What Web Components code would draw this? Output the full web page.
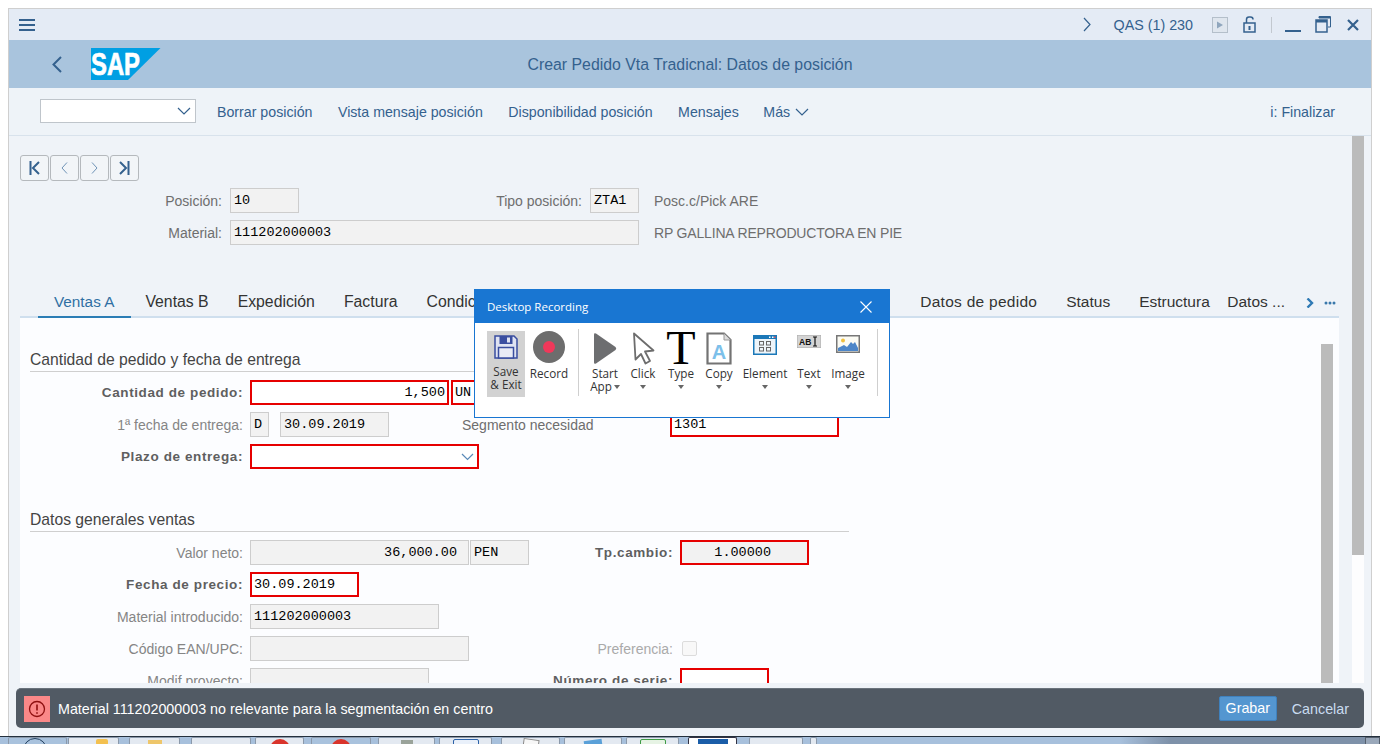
<!DOCTYPE html>
<html lang="es">
<head>
<meta charset="utf-8">
<title>Crear Pedido</title>
<style>
  html, body { margin: 0; padding: 0; height: 744px; overflow: hidden; background: #fff; }
  body { display: flex; flex-direction: column; padding-top: 8px; box-sizing: border-box; font-family: "Liberation Sans", Arial, sans-serif; }
</style>
</head>
<body>
<sap-window>
  <sap-titlebar></sap-titlebar>
  <sap-header title-text="Crear Pedido Vta Tradicnal: Datos de posición"></sap-header>
  <sap-toolbar></sap-toolbar>
  <sap-main>
    <sap-nav></sap-nav>
    <sap-head-form></sap-head-form>
    <sap-tabs></sap-tabs>
    <sap-panel>
      <sap-section title-text="Cantidad de pedido y fecha de entrega">
        <sap-row label="Cantidad de pedido:" bold>
          <sap-field w="199" value="1,500" align="right" kind="error"></sap-field>
          <sap-field w="60" value="UN" kind="error" style="margin-left:2px"></sap-field>
        </sap-row>
        <sap-row label="1ª fecha de entrega:" light>
          <sap-field w="19" value="D" kind="ro"></sap-field>
          <sap-field w="109" value="30.09.2019" kind="ro" style="margin-left:11px"></sap-field>
          <sap-label style="margin-left:73px">Segmento necesidad</sap-label>
          <sap-field slot="field2" w="169" value="1301" kind="error" style="margin-left:-10px"></sap-field>
        </sap-row>
        <sap-row label="Plazo de entrega:" bold>
          <sap-field w="229" kind="error" dropdown></sap-field>
        </sap-row>
      </sap-section>
      <sap-section title-text="Datos generales ventas" style="margin-top:41px">
        <sap-row label="Valor neto:" light>
          <sap-field w="219" value="36,000.00" align="right" pad="11" kind="ro"></sap-field>
          <sap-field w="59" value="PEN" kind="ro" style="margin-left:1px"></sap-field>
          <sap-label slot="label2" bold>Tp.cambio:</sap-label>
          <sap-field slot="field2" w="129" value="1.00000" align="right" pad="36" kind="error-ro"></sap-field>
        </sap-row>
        <sap-row label="Fecha de precio:" bold>
          <sap-field w="109" value="30.09.2019" kind="error"></sap-field>
        </sap-row>
        <sap-row label="Material introducido:" light>
          <sap-field w="189" value="111202000003" kind="ro"></sap-field>
        </sap-row>
        <sap-row label="Código EAN/UPC:" light>
          <sap-field w="219" kind="ro"></sap-field>
          <sap-label slot="label2" faded>Preferencia:</sap-label>
          <sap-check slot="field2"></sap-check>
        </sap-row>
        <sap-row label="Modif proyecto:" light>
          <sap-field w="179" kind="ro"></sap-field>
          <sap-label slot="label2" bold>Número de serie:</sap-label>
          <sap-field slot="field2" w="89" kind="error"></sap-field>
        </sap-row>
      </sap-section>
    </sap-panel>
  </sap-main>
  <sap-message text="Material 111202000003 no relevante para la segmentación en centro"></sap-message>
</sap-window>
<sap-taskbar></sap-taskbar>
<recording-dialog></recording-dialog>

<script>
const BLUE = '#34618e';

class Box extends HTMLElement {
  constructor() {
    super();
    this.attachShadow({ mode: "open" });
  }
  connectedCallback() {
    this.shadowRoot.innerHTML = `<style>${this.css()}</style>${this.render()}`;
  }
  css() { return ''; }
  render() { return '<slot></slot>'; }
}

class SapWindow extends Box {
  css() {
    return `:host {
      display: flex; flex-direction: column; box-sizing: border-box;
      margin: 0 8px; height: 728px; flex: none;
      background: #eff3f8;
      border: 1px solid #cfcfcf; border-bottom: 0;
      font-family: "Liberation Sans", Arial, sans-serif;
    }`;
  }
}

class SapTitlebar extends Box {
  css() {
    return `:host { display: flex; align-items: center; height: 31px; flex: none; background: #e4ebf5; position: relative; }
      svg { display: block; flex: none; }
      .burger { margin-left: 10px; }
      .right { margin-left: auto; display: flex; align-items: center; }
      .sys { color: ${BLUE}; font-size: 14.300px; margin: 0 19px 0 23px; white-space: nowrap; }`;
  }
  render() {
    return `
      <svg class="burger" width="16" height="14" viewBox="0 0 16 14" fill="${BLUE}"><rect y="1" width="16" height="2"/><rect y="6" width="16" height="2"/><rect y="11" width="16" height="2"/></svg>
      <div class="right">
        <svg width="8" height="15" viewBox="0 0 8 15" fill="none" stroke="${BLUE}" stroke-width="1.2"><path d="M1 1l6 6.500l-6 6.500"/></svg>
        <span class="sys">QAS (1) 230</span>
        <svg width="16" height="16" viewBox="0 0 16 16"><rect x=".5" y=".5" width="15" height="15" fill="#dfe6ee" stroke="#b4bfca"/><path d="M5 4.500l6 3.500l-6 3.500z" fill="#8fa6bd"/></svg>
        <svg style="margin-left:15px" width="13" height="17" viewBox="0 0 13 17" fill="none" stroke="${BLUE}" stroke-width="1.500"><rect x="1" y="7" width="11" height="9"/><path d="M3.500 7V3.500Q3.500 1 6 1h1.500Q10 1 10 3.500"/><rect x="5.500" y="10" width="2" height="4" fill="${BLUE}" stroke="none"/></svg>
        <svg style="margin-left:15px" width="1" height="16"><rect width="1" height="16" fill="#c2c8cf"/></svg>
        <svg style="margin-left:13px" width="16" height="16" viewBox="0 0 16 16"><rect y="13" width="16" height="2" fill="${BLUE}"/></svg>
        <svg style="margin-left:14px" width="16" height="17" viewBox="0 0 16 17" fill="none" stroke="${BLUE}"><path d="M4 2V.500h11.500V11H13" /><rect x="1" y="4" width="11" height="12" stroke-width="1.500"/><rect x="1" y="4" width="11" height="2.500" fill="${BLUE}" stroke="none"/><rect x="4" y="1" width="11" height="1.500" fill="${BLUE}" stroke="none"/></svg>
        <svg style="margin:0 12px 0 16px" width="12" height="12" viewBox="0 0 12 12" fill="none" stroke="${BLUE}" stroke-width="2.200"><path d="M1 1l10 10M11 1L1 11"/></svg>
      </div>`;
  }
}

class SapHeader extends Box {
  css() {
    return `:host { display: grid; grid-template-columns: 1fr auto 1fr; align-items: center; height: 48px; flex: none; background: #a9c4dd; }
      .left { display: flex; align-items: center; padding-left: 43px; }
      h1 { margin: 1px 0 0; font: 400 15.850px "Liberation Sans", Arial, sans-serif; color: ${BLUE}; white-space: nowrap; }
      svg { display: block; }
      text { font: 700 31px "Liberation Sans", Arial, sans-serif; fill: #fff; stroke: #fff; stroke-width: .7px; }`;
  }
  render() {
    return `
      <div class="left">
        <svg width="10" height="17" viewBox="0 0 10 17" fill="none" stroke="${BLUE}" stroke-width="2"><path d="M9 1L1.500 8.500L9 16"/></svg>
        <svg style="margin-left:29px" width="70" height="32" viewBox="0 0 70 32">
          <path d="M0 0H69.500L37 32H0z" fill="#009fe3"/>
          <text x="0" y="27" textLength="49" lengthAdjust="spacingAndGlyphs">SAP</text>
        </svg>
      </div>
      <h1>${this.getAttribute('title-text')}</h1>
      <div></div>`;
  }
}

class SapToolbar extends Box {
  css() {
    return `:host { display: flex; align-items: center; height: 48px; flex: none; box-sizing: border-box; border-bottom: 1px solid #d8e2ec; background: #eef3f8; padding-left: 31px; color: ${BLUE}; font-size: 14.200px; white-space: nowrap; }
      .select { width: 156px; height: 24px; box-sizing: border-box; background: #fff; border: 1px solid #bfc5cb; display: flex; align-items: center; justify-content: flex-end; padding-right: 4px; margin: 11px 21px 0 0; align-self: flex-start; }
      span { margin-right: 25.500px; }
      .mas { display: flex; align-items: center; gap: 5px; margin-left: -1px; }
      .end { margin: 0 36px 0 auto; }
      svg { display: block; }`;
  }
  render() {
    const chev = `<svg width="14" height="8" viewBox="0 0 14 8" fill="none" stroke="${BLUE}" stroke-width="1.200"><path d="M1 1l6 6l6-6"/></svg>`;
    return `
      <div class="select">${chev}</div>
      <span>Borrar posición</span>
      <span>Vista mensaje posición</span>
      <span>Disponibilidad posición</span>
      <span>Mensajes</span>
      <span class="mas">Más ${chev}</span>
      <span class="end">i: Finalizar</span>`;
  }
}

class SapMain extends Box {
  css() {
    return `:host { display: flex; flex: 1; min-height: 0; overflow: hidden; padding-left: 11px; }
      .col { width: 1319px; flex: none; display: flex; flex-direction: column; min-height: 0; padding-top: 19px; box-sizing: border-box; }
      .track { width: 12px; margin-left: 13px; flex: none; background: #fdfdfe; }
      .thumb { height: 419px; background: #bbb; }`;
  }
  render() {
    return `<div class="col"><slot></slot></div><div class="track"><div class="thumb"></div></div>`;
  }
}

class SapNav extends Box {
  css() {
    return `:host { display: flex; gap: 1px; flex: none; }
      div { width: 29px; height: 26px; box-sizing: border-box; border: 1px solid #b5b9bd; border-radius: 3px; display: flex; align-items: center; justify-content: center; background: #f2f5f8; }
      svg { display: block; }`;
  }
  render() {
    return `
      <div><svg width="11" height="14" viewBox="0 0 11 14" fill="none" stroke="${BLUE}" stroke-width="2"><path d="M1.500 0v14M10 1L4 7l6 6"/></svg></div>
      <div><svg width="7" height="12" viewBox="0 0 7 12" fill="none" stroke="#6f93b6"><path d="M6 .500L1 6l5 5.500"/></svg></div>
      <div><svg width="7" height="12" viewBox="0 0 7 12" fill="none" stroke="#6f93b6"><path d="M1 .500L6 6l-5 5.500"/></svg></div>
      <div><svg width="11" height="14" viewBox="0 0 11 14" fill="none" stroke="${BLUE}" stroke-width="2"><path d="M9.500 0v14M1 1l6 6l-6 6"/></svg></div>`;
  }
}

class SapLabel extends Box {
  css() {
    const bold = this.hasAttribute('bold');
    const color = this.hasAttribute('faded') ? '#aaa' : bold ? '#5f5f5f' : this.hasAttribute('light') ? '#858585' : '#6e6e6e';
    return `:host { display: block; flex: none; white-space: nowrap; height: 25px; line-height: 26px; font-size: 14px; color: ${color}; text-align: right;
      ${bold ? 'font-weight: 700; font-size: 13.500px; letter-spacing: .6px;' : ''} }`;
  }
}

class SapField extends Box {
  css() {
    const kind = this.getAttribute('kind') || 'ro';
    const err = kind.startsWith('error');
    const w = this.getAttribute('w') || 100;
    const bg = kind === 'error' ? '#fff' : '#f2f2f2';
    const pad = this.getAttribute('pad') || 2;
    const right = this.getAttribute('align') === 'right';
    return `:host { display: block; flex: none; width: ${w}px; height: 25px; box-sizing: border-box; position: relative; background: ${bg};
        border: ${err ? '2px solid #e60000' : '1px solid #cdcdcd'};
        font: 13.500px/${err ? 21 : 24}px "Liberation Mono", "Courier New", monospace; color: #000; white-space: pre; overflow: hidden;
        padding: 0 ${right ? pad : 0}px 0 ${right ? 0 : (err ? 2 : 3)}px; text-align: ${right ? 'right' : 'left'}; }
      svg { position: absolute; right: 3px; top: 7px; }`;
  }
  render() {
    const chev = this.hasAttribute('dropdown')
      ? `<svg width="13" height="8" viewBox="0 0 13 8" fill="none" stroke="#5a8ab8" stroke-width="1.200"><path d="M1 1l5.500 5.500L12 1"/></svg>` : '';
    return `${this.getAttribute('value') || ''}${chev}`;
  }
}

class SapCheck extends Box {
  css() {
    return `:host { display: block; width: 15px; height: 15px; box-sizing: border-box; margin: 5px 0 0 2px; border: 1px solid #dcdcdc; border-radius: 2px; background: #f8f8f8; }`;
  }
  render() { return ''; }
}

class SapHeadForm extends Box {
  css() {
    return `:host { display: grid; flex: none; grid-template-columns: 202px 69px 275px 49px auto; column-gap: 8px; row-gap: 7px; margin-top: 7px; }
      .wide { grid-column: 2 / span 3; }
      .desc { margin-left: 7px; height: 25px; line-height: 26px; font-size: 14px; color: #6e6e6e; white-space: nowrap; }`;
  }
  render() {
    return `
      <sap-label>Posición:</sap-label>
      <sap-field w="69" value="10"></sap-field>
      <sap-label>Tipo posición:</sap-label>
      <sap-field w="49" value="ZTA1"></sap-field>
      <div class="desc">Posc.c/Pick ARE</div>
      <sap-label>Material:</sap-label>
      <sap-field class="wide" w="409" value="111202000003"></sap-field>
      <div class="desc" style="letter-spacing:-.17px">RP GALLINA REPRODUCTORA EN PIE</div>`;
  }
}

class SapTabs extends Box {
  css() {
    return `:host { display: flex; flex: none; align-items: center; height: 28px; margin-top: 45px; box-sizing: border-box; border-bottom: 2px solid #cfdfee; font-size: 15.500px; color: #333; white-space: nowrap; position: relative; }
      span { padding: 0 14.500px; line-height: 23px; height: 26px; box-sizing: border-box; }
      .l { font-size: 15.800px; }
      .on { margin-left: 18px; padding: 0 16.500px 0 16px; color: #2f6fa3; border-bottom: 2px solid #2b7db5; height: 28px; margin-bottom: -2px; font-size: 15.300px; }
      .right { margin-left: auto; display: flex; align-items: center; }
      .right span:last-of-type { padding-right: 0; padding-left: 3px; }
      svg { display: block; }`;
  }
  render() {
    return `
      <span class="on">Ventas A</span><span class="l">Ventas B</span><span class="l">Expedición</span><span class="l">Factura</span><span class="l">Condiciones</span>
      <div class="right">
        <span style="letter-spacing:.27px">Datos de pedido</span><span>Status</span><span>Estructura</span><span>Datos ...</span>
        <svg style="margin-left:21px" width="8" height="10" viewBox="0 0 8 10" fill="none" stroke="#2f7ab5" stroke-width="2.400"><path d="M1.500 .500L6 5L1.500 9.500"/></svg>
        <svg style="margin:0 3px 0 10px" width="12" height="4" viewBox="0 0 12 4" fill="#3a78ab"><circle cx="2" cy="2" r="1.500"/><circle cx="6" cy="2" r="1.500"/><circle cx="10" cy="2" r="1.500"/></svg>
      </div>`;
  }
}

class SapPanel extends Box {
  css() {
    return `:host { display: flex; flex: 1; min-height: 0; background: #fcfdff; overflow: hidden; }
      .form { flex: 1; padding: 32px 0 0 10px; min-width: 0; }
      .bar { width: 12px; margin: 26px 6px 0 0; background: #bbb; flex: none; }`;
  }
  render() {
    return `<div class="form"><slot></slot></div><div class="bar"></div>`;
  }
}

class SapSection extends Box {
  css() {
    return `:host { display: block; }
      h2 { margin: 0 0 8px; width: 819px; height: 22px; box-sizing: border-box; border-bottom: 1px solid #cfcfcf; font: 400 15.700px/20px "Liberation Sans", Arial, sans-serif; color: #444; }
      .rows { display: flex; flex-direction: column; gap: 7px; }`;
  }
  render() {
    return `<h2>${this.getAttribute('title-text')}</h2><div class="rows"><slot></slot></div>`;
  }
}

class SapRow extends Box {
  css() {
    return `:host { display: grid; grid-template-columns: 213px 313px 103px auto; column-gap: 7px; height: 25px; }
      .fields { display: flex; min-width: 0; }
      .r { display: flex; }
      .end { justify-content: flex-end; }`;
  }
  render() {
    const bold = this.hasAttribute('bold') ? 'bold' : '';
    const light = this.hasAttribute('light') ? 'light' : '';
    return `
      <sap-label ${bold} ${light}>${this.getAttribute('label')}</sap-label>
      <div class="fields"><slot></slot></div>
      <div class="r end"><slot name="label2"></slot></div>
      <div class="r"><slot name="field2"></slot></div>`;
  }
}

class SapMessage extends Box {
  css() {
    return `:host { display: flex; align-items: center; flex: none; height: 40px; margin: 5px 7px 8px; box-sizing: border-box; background: #515a64; border-radius: 5px; padding-left: 8px; font-size: 14.300px; color: #fff; white-space: nowrap; border-top: 1px solid #6a737c; }
      .ico { width: 26px; height: 26px; background: #fa8888; display: flex; align-items: center; justify-content: center; margin-right: 8px; flex: none; }
      .grabar { margin-left: auto; width: 58px; height: 25px; box-sizing: border-box; background: #5496d0; border: 1px solid #3f81bd; border-radius: 2px; text-align: center; line-height: 23px; color: #fff; }
      .cancel { margin: 0 15px 0 15px; color: #c9dcf0; }
      svg { display: block; }`;
  }
  render() {
    return `
      <div class="ico"><svg width="18" height="18" viewBox="0 0 18 18" fill="none" stroke="#8e1010" stroke-width="1.300"><circle cx="9" cy="9" r="7.500"/><path d="M9 4.500v6M9 12.200v1.600" stroke-width="1.600"/></svg></div>
      <span>${this.getAttribute('text')}</span>
      <span class="grabar">Grabar</span>
      <span class="cancel">Cancelar</span>`;
  }
}

class SapTaskbar extends Box {
  css() {
    return `:host { display: flex; flex: none; height: 8px; box-sizing: border-box; border-top: 1px solid #24303d; overflow: hidden;
        background: linear-gradient(90deg, #a7c0dc 0, #a7c0dc 1120px, #7e91a9 1170px, #7e91a9 100%); padding-left: 8px; position: relative; }
      .t { flex: none; height: 7px; box-sizing: border-box; background: #e3e9f1; border: 1px solid #8b99aa; border-bottom: 0; border-radius: 2px 2px 0 0; display: flex; justify-content: center; }
      .t.sel { background: #a9c2dd; }
      .t.cur { background: #fff; border-color: #334; }
      .t i { display: block; box-sizing: border-box; flex: none; }
      .tray { margin-left: auto; width: 15px; background: #9aa8ba; border: 1px solid #55606e; border-bottom: 0; box-sizing: border-box; }`;
  }
  render() {
    const icon = {
      ring: 'width:24px;height:24px;border:1px solid #24415f;border-radius:50%;background:#a9c2dd;margin-right:5px',
      folder: 'width:12px;height:6px;background:#f3c04f;margin-left:16px;margin-top:1px;border-radius:2px',
      note: 'width:14px;height:5px;background:#eec66a;margin-top:2px',
      none: 'width:0',
      red: 'width:20px;height:20px;border-radius:50%;background:#d9342b;margin-top:1px',
      grey: 'width:12px;height:5px;background:#9aa39a;margin-top:2px',
      blue: 'width:26px;height:12px;border:1px solid #2c62a8;border-radius:2px;background:#e9f0fa;margin-top:1px',
      paper: 'width:16px;height:10px;background:#f7f7f7;border:1px solid #888;margin-top:1px;transform:rotate(8deg)',
      send: 'width:18px;height:6px;background:#5aa0d8;margin-top:2px;transform:rotate(-8deg)',
      green: 'width:26px;height:12px;border:1px solid #3d9a45;border-radius:2px;background:#e6f3e4;margin-top:1px',
      solid: 'width:30px;height:7px;background:#1a5da8;margin-top:1px',
    };
    const items = [
      [59, 0, 'ring', 'sel'], [51, 1, 'folder'], [51, 10, 'note'], [60, 11, 'none'], [49, 4, 'red'],
      [60, 7, 'red', 'sel'], [57, 7, 'grey'], [53, 4, 'blue'], [59, 9, 'paper'], [58, 4, 'send'],
      [53, 4, 'green'], [49, 9, 'solid', 'cur'], [54, 12, 'none'], [7, 7, 'none'],
    ];
    return items.map(([w, m, ic, cls]) => `<div class="t ${cls || ''}" style="width:${w}px;margin-left:${m}px"><i style="${icon[ic]}"></i></div>`).join('')
      + `<div class="tray"></div>`;
  }
}

class DialogItem extends Box {
  css() {
    const w = this.getAttribute('w');
    const selected = this.hasAttribute('selected');
    return `:host { display: flex; flex-direction: column; align-items: center; flex: none; width: ${w}px; height: 66px; background: ${selected ? '#d2d2d2' : 'transparent'}; font: 400 11.700px/13px "Open Sans", "Liberation Sans", sans-serif; color: #333; white-space: nowrap; }
      .icon { height: ${selected ? 34 : 36}px; flex: none; display: flex; justify-content: center; align-items: flex-start; }
      .line { text-align: center; display: flex; align-items: center; gap: 2px; }
      .caret { width: 0; height: 0; border: 3.500px solid transparent; border-top: 4px solid #666; border-bottom: 0; flex: none; }
      .solo { margin-top: 5px; }`;
  }
  render() {
    const lines = (this.getAttribute('label') || '').split('|');
    const caret = this.hasAttribute('caret');
    const two = lines.length > 1;
    return `
      <div class="icon"><slot></slot></div>
      <div class="line">${lines[0]}</div>
      ${two ? `<div class="line">${lines[1]}${caret ? '<i class="caret"></i>' : ''}</div>` : (caret ? '<i class="caret solo"></i>' : '')}`;
  }
}

class RecordingDialog extends Box {
  css() {
    return `:host { position: absolute; left: 474px; top: 289px; width: 416px; height: 129px; box-sizing: border-box; background: #fff; border: 1px solid #1976d2; font-family: "Open Sans", "Liberation Sans", sans-serif; }
      header { height: 33px; background: #1976d2; color: #fff; font-size: 11.500px; display: flex; align-items: center; justify-content: space-between; padding: 0 17px 0 12px; }
      .bar { display: flex; padding: 8px 0 0 12px; }
      .sep { width: 1px; height: 67px; margin-top: -2px; background: #cfcfcf; flex: none; }
      svg { display: block; flex: none; }
      .t { font: 400 48px/32px "Liberation Serif", "Times New Roman", serif; color: #000; height: 32px; margin-top: 1px; }`;
  }
  render() {
    return `
      <header><span>Desktop Recording</span>
        <svg width="12" height="12" viewBox="0 0 12 12" fill="none" stroke="#fff" stroke-width="1.100"><path d="M.5.5l11 11M11.500.5l-11 11"/></svg>
      </header>
      <div class="bar">
        <dialog-item w="38" label="Save|&amp; Exit" selected>
          <svg style="margin-top:4px" width="24" height="24" viewBox="0 0 24 24"><path d="M1 1h19l3 3v19H1z" fill="#dfe3f2" stroke="#3a4ea0" stroke-width="1.500"/><rect x="5.500" y="1" width="13" height="8" fill="#3a4ea0"/><rect x="13" y="2.500" width="3" height="5" fill="#dfe3f2"/><rect x="4.500" y="12.500" width="15" height="10.500" fill="#e9ebf5" stroke="#3a4ea0" stroke-width="1.500"/></svg>
        </dialog-item>
        <dialog-item w="40" label="Record" style="margin:0 9px 0 4px">
          <svg width="32" height="32" viewBox="0 0 32 32"><circle cx="16" cy="16" r="16" fill="#6d6d6d"/><circle cx="16" cy="16" r="6" fill="#f0385a"/></svg>
        </dialog-item>
        <div class="sep"></div>
        <dialog-item w="52" label="Start|App" caret>
          <svg style="margin-top:1px" width="25" height="33" viewBox="0 0 25 33"><path d="M2 2.500Q2 .500 4 1.500L23.500 15Q25 16.500 23.500 18L4 31.500Q2 32.500 2 30.500z" fill="#6d6e70" transform="translate(-1 0)"/></svg>
        </dialog-item>
        <dialog-item w="24" label="Click" caret>
          <svg style="margin-top:1px" width="23" height="33" viewBox="0 0 23 33"><path d="M2 1.500L21.500 18.500L13 19.500L18 29L13.500 31.500L9 22L3.500 27.500z" fill="#fff" stroke="#6d6d6d" stroke-width="1.800" stroke-linejoin="round"/></svg>
        </dialog-item>
        <dialog-item w="52" label="Type" caret>
          <span class="t">T</span>
        </dialog-item>
        <dialog-item w="24" label="Copy" caret>
          <svg style="margin-top:1px" width="26" height="33" viewBox="0 0 26 33"><path d="M1.500 1.500H18L24.500 8V31.500H1.500z" fill="#fff" stroke="#737373" stroke-width="2.200"/><path d="M18 1.500V8h6.500" fill="#ddd" stroke="#999"/><text x="13" y="27" text-anchor="middle" font-family="Liberation Sans, sans-serif" font-weight="700" font-size="20" fill="#7cc0ea">A</text></svg>
        </dialog-item>
        <dialog-item w="68" label="Element" caret>
          <svg style="margin-top:4px" width="24" height="20" viewBox="0 0 24 20"><rect width="24" height="20" fill="#1b78b8"/><rect x="1.500" y="4" width="21" height="14.500" fill="#eef5fa"/><rect x="16" y="1.500" width="1.500" height="1.500" fill="#fff"/><rect x="19" y="1.500" width="1.500" height="1.500" fill="#fff"/><rect x="21" y="1.500" width="1.500" height="1.500" fill="#f05050"/><g fill="none" stroke="#666"><rect x="6.500" y="6.500" width="4" height="3.500"/><rect x="13.500" y="6.500" width="4" height="3.500"/><rect x="6.500" y="12.500" width="4" height="3.500"/><rect x="13.500" y="12.500" width="4" height="3.500"/></g></svg>
        </dialog-item>
        <dialog-item w="20" label="Text" caret>
          <svg style="margin-top:4px" width="24" height="13" viewBox="0 0 24 13"><rect width="24" height="13" fill="#d4d4d4" stroke="#aaa"/><text x="2" y="10" font-family="Liberation Sans, sans-serif" font-weight="700" font-size="8.500" fill="#111">AB</text><path d="M16 2h4M18 2v9M16 11h4" stroke="#111" stroke-width="1.200" fill="none"/></svg>
        </dialog-item>
        <dialog-item w="58" label="Image" caret>
          <svg style="margin-top:4px" width="24" height="18" viewBox="0 0 24 18"><rect x=".75" y=".75" width="22.500" height="16.500" fill="#fbfbf4" stroke="#777" stroke-width="1.500"/><circle cx="7" cy="5.500" r="2" fill="#f0c040"/><path d="M2 16V13L8 10L11 12L15 7L17 9L19 7L22 13V16z" fill="#4d86c8"/></svg>
        </dialog-item>
        <div class="sep"></div>
      </div>`;
  }
}

customElements.define("sap-window", SapWindow);
customElements.define("sap-titlebar", SapTitlebar);
customElements.define("sap-header", SapHeader);
customElements.define("sap-toolbar", SapToolbar);
customElements.define("sap-main", SapMain);
customElements.define("sap-nav", SapNav);
customElements.define("sap-label", SapLabel);
customElements.define("sap-field", SapField);
customElements.define("sap-check", SapCheck);
customElements.define("sap-head-form", SapHeadForm);
customElements.define("sap-tabs", SapTabs);
customElements.define("sap-panel", SapPanel);
customElements.define("sap-section", SapSection);
customElements.define("sap-row", SapRow);
customElements.define("sap-message", SapMessage);
customElements.define("sap-taskbar", SapTaskbar);
customElements.define("dialog-item", DialogItem);
customElements.define("recording-dialog", RecordingDialog);
</script>
</body>
</html>
